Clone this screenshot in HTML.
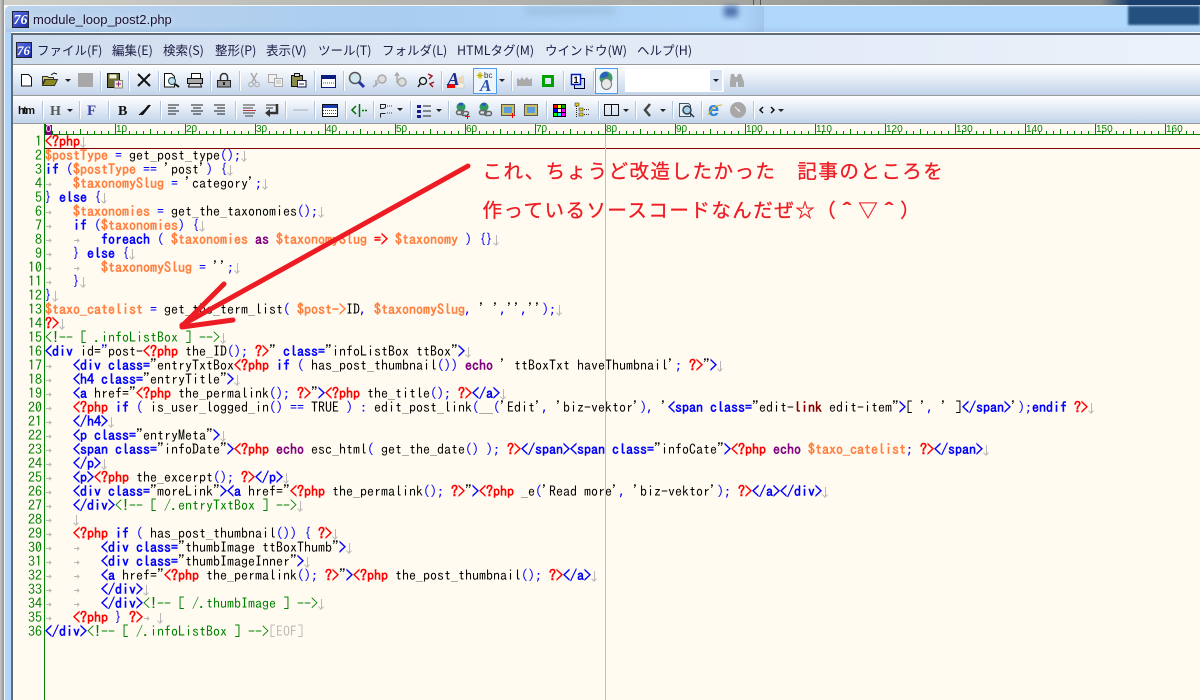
<!DOCTYPE html>
<html lang="ja"><head><meta charset="utf-8"><title>module_loop_post2.php</title>
<style>
html,body{margin:0;padding:0;background:#fffbf0}
#w{position:relative;width:1200px;height:700px;overflow:hidden;background:#fffbf0}
#w div{position:absolute}
.m{top:42px;font:12.5px/16px "Noto Sans CJK JP",sans-serif;color:#1c1c44;white-space:pre}
.l{left:45px;height:14px;font:14px/14px "IPAGothic","Liberation Mono",monospace;color:#000;white-space:pre;width:1155px;overflow:hidden}
.ln{left:13px;width:29px;text-align:right;height:14px;font:14px/14px "IPAGothic",monospace;color:#008000}
.l i{font-style:normal}
.r{color:#f00;font-weight:bold}.b{color:#00f;font-weight:bold}.n{color:#00f}.o{color:#ff8040;font-weight:bold}
.p{color:#800080;font-weight:bold}.g{color:#008000}.d{color:#800000;font-weight:bold}.x{color:#bbb}
.t,.e{display:inline-block;position:relative;height:14px;color:transparent;font:11px/14px "Liberation Mono",monospace;vertical-align:top}
.t{width:28px}.e{width:7px}
.t::before{content:"";position:absolute;left:1px;top:8px;width:5px;height:1px;background:#b8b8b8}
.t::after{content:"";position:absolute;left:3px;top:7px;width:2px;height:2px;border-top:1px solid #b8b8b8;border-right:1px solid #b8b8b8;transform:rotate(45deg)}
.e::before{content:"";position:absolute;left:3px;top:3px;width:1px;height:10px;background:#b8b8b8}
.e::after{content:"";position:absolute;left:1px;top:9px;width:3px;height:3px;border-bottom:1px solid #b8b8b8;border-right:1px solid #b8b8b8;transform:rotate(45deg)}
.rl{top:125px;font:10px/10px "Liberation Sans",sans-serif;color:#008000}
.s{width:1px;background:#b4c6dc;box-shadow:1px 0 0 #fff}
.jp{left:482.500px;font:19.500px/26px "Noto Sans CJK JP",sans-serif;letter-spacing:1.480px;color:#ed1c24;white-space:pre;-webkit-text-stroke:.3px #ed1c24}
.jp span{font-family:"IPAGothic",sans-serif;-webkit-text-stroke:1px #ed1c24}
</style></head><body><div id="w">
<!-- blurred background -->
<div style="left:0;top:0;width:1200px;height:5px;background:linear-gradient(90deg,#d0cfc8,#bdbdb8 300px,#a9a9a4 700px,#8b8b86 1000px,#8b8b86 1100px,#1b3f6d 1130px)"></div>
<div style="left:753px;top:0;width:1px;height:5px;background:#555"></div>
<div style="left:760px;top:0;width:1px;height:5px;background:#555"></div>
<div style="left:0;top:0;width:4px;height:700px;background:linear-gradient(90deg,#c8c8c8,#8f8f8f)"></div>
<!-- frame -->
<div style="left:4px;top:5px;width:1196px;height:695px;background:#b0d6fb;border-top:1px solid #f4f8fc;border-left:1px solid #f4f8fc;border-top-left-radius:6px;box-sizing:border-box"></div>
<div style="left:6px;top:6px;width:1194px;height:27px;background:linear-gradient(90deg,#bcd3ec,#a9cdf0 400px,#b0d8fd 800px,#b0d8fd 1200px);border-top-left-radius:5px"></div>
<div style="left:6px;top:26px;width:1194px;height:6px;background:linear-gradient(180deg,rgba(160,195,230,0),rgba(160,195,230,.7))"></div>
<div style="left:525px;top:6px;width:90px;height:9px;background:#88a8b8;opacity:.35;filter:blur(4px)"></div>
<div style="left:724px;top:6px;width:14px;height:11px;background:#3a5c9c;opacity:.8;filter:blur(3px)"></div>
<div style="left:738px;top:6px;width:26px;height:26px;background:linear-gradient(90deg,rgba(120,150,190,0),rgba(120,150,190,.25))"></div>
<div style="left:1128px;top:6px;width:72px;height:19px;background:#24507f;filter:blur(1px)"></div>
<div style="left:11px;top:32px;width:1189px;height:1px;background:#fff"></div>
<div style="left:11px;top:33px;width:1189px;height:2px;background:#5f6b78"></div>
<div style="left:11px;top:33px;width:2px;height:667px;background:#5f6b78"></div>
<div style="left:33px;top:11px;font:13px/17px 'Liberation Sans',sans-serif;color:#1c1030;text-shadow:0 0 6px #e8f2ff;white-space:pre">module_loop_post2.php</div>
<!-- text panel -->
<div style="left:13px;top:124px;width:1187px;height:576px;background:#fffbf0"></div>
<!-- menu -->
<div style="left:13px;top:35px;width:1187px;height:29px;background:linear-gradient(90deg,#cddcee,#dfe8f4 400px,#e6edf8 900px,#ecf2fb)"></div>
<div style="left:13px;top:64px;width:1187px;height:1px;background:#9a9a9a"></div>
<div class="m" style="left:37px">ファイル(F)</div><div class="m" style="left:112px">編集(E)</div><div class="m" style="left:163px">検索(S)</div><div class="m" style="left:215px">整形(P)</div><div class="m" style="left:266px">表示(V)</div><div class="m" style="left:318px">ツール(T)</div><div class="m" style="left:382px">フォルダ(L)</div><div class="m" style="left:457px">HTMLタグ(M)</div><div class="m" style="left:545px">ウインドウ(W)</div><div class="m" style="left:637px">ヘルプ(H)</div>
<!-- toolbars -->
<div style="left:13px;top:65px;width:1187px;height:30px;background:linear-gradient(#fff,#eef3fa 30%,#c2d4ea)"></div>
<div style="left:13px;top:95px;width:1187px;height:1px;background:#9a9a9a"></div>
<div style="left:13px;top:96px;width:1187px;height:27px;background:linear-gradient(#fff,#eef3fa 30%,#c2d4ea)"></div>
<div style="left:13px;top:123px;width:1187px;height:1px;background:#9a9a9a"></div>
<div class="s" style="left:100px;top:71px;height:20px"></div><div class="s" style="left:128px;top:71px;height:20px"></div><div class="s" style="left:158px;top:71px;height:20px"></div><div class="s" style="left:210px;top:71px;height:20px"></div><div class="s" style="left:239px;top:71px;height:20px"></div><div class="s" style="left:314px;top:71px;height:20px"></div><div class="s" style="left:343px;top:71px;height:20px"></div><div class="s" style="left:441px;top:71px;height:20px"></div><div class="s" style="left:511px;top:71px;height:20px"></div><div class="s" style="left:563px;top:71px;height:20px"></div><div class="s" style="left:593px;top:71px;height:20px"></div>
<div class="s" style="left:42px;top:101px;height:18px"></div><div class="s" style="left:79px;top:101px;height:18px"></div><div class="s" style="left:108px;top:101px;height:18px"></div><div class="s" style="left:160px;top:101px;height:18px"></div><div class="s" style="left:235px;top:101px;height:18px"></div><div class="s" style="left:285px;top:101px;height:18px"></div><div class="s" style="left:314px;top:101px;height:18px"></div><div class="s" style="left:345px;top:101px;height:18px"></div><div class="s" style="left:373px;top:101px;height:18px"></div><div class="s" style="left:410px;top:101px;height:18px"></div><div class="s" style="left:448px;top:101px;height:18px"></div><div class="s" style="left:546px;top:101px;height:18px"></div><div class="s" style="left:598px;top:101px;height:18px"></div><div class="s" style="left:635px;top:101px;height:18px"></div><div class="s" style="left:672px;top:101px;height:18px"></div><div class="s" style="left:701px;top:101px;height:18px"></div><div class="s" style="left:753px;top:101px;height:18px"></div>
<!-- ruler -->
<div style="left:45px;top:131px;width:1155px;height:3px;background:repeating-linear-gradient(90deg,#008000 0 1px,transparent 1px 7px)"></div>
<div style="left:45px;top:129px;width:1155px;height:2px;background:repeating-linear-gradient(90deg,#008000 0 1px,transparent 1px 35px)"></div>
<div style="left:45px;top:124px;width:1155px;height:5px;background:repeating-linear-gradient(90deg,#008000 0 1px,transparent 1px 70px)"></div>
<div style="left:45px;top:134px;width:1155px;height:1px;background:#008000"></div>
<div style="left:45px;top:125px;width:7px;height:10px;background:#800080;color:#fff;font:10px/10px 'Liberation Sans',sans-serif;text-align:center">0</div>
<div class="rl" style="left:116px">10</div><div class="rl" style="left:186px">20</div><div class="rl" style="left:256px">30</div><div class="rl" style="left:326px">40</div><div class="rl" style="left:396px">50</div><div class="rl" style="left:466px">60</div><div class="rl" style="left:536px">70</div><div class="rl" style="left:606px">80</div><div class="rl" style="left:676px">90</div><div class="rl" style="left:746px">100</div><div class="rl" style="left:816px">110</div><div class="rl" style="left:886px">120</div><div class="rl" style="left:956px">130</div><div class="rl" style="left:1026px">140</div><div class="rl" style="left:1096px">150</div><div class="rl" style="left:1166px">160</div>
<div style="left:44px;top:124px;width:1px;height:576px;background:#008000"></div>
<!-- line numbers -->
<div class="ln" style="top:134px">1</div><div class="ln" style="top:148px">2</div><div class="ln" style="top:162px">3</div><div class="ln" style="top:176px">4</div><div class="ln" style="top:190px">5</div><div class="ln" style="top:204px">6</div><div class="ln" style="top:218px">7</div><div class="ln" style="top:232px">8</div><div class="ln" style="top:246px">9</div><div class="ln" style="top:260px">10</div><div class="ln" style="top:274px">11</div><div class="ln" style="top:288px">12</div><div class="ln" style="top:302px">13</div><div class="ln" style="top:316px">14</div><div class="ln" style="top:330px">15</div><div class="ln" style="top:344px">16</div><div class="ln" style="top:358px">17</div><div class="ln" style="top:372px">18</div><div class="ln" style="top:386px">19</div><div class="ln" style="top:400px">20</div><div class="ln" style="top:414px">21</div><div class="ln" style="top:428px">22</div><div class="ln" style="top:442px">23</div><div class="ln" style="top:456px">24</div><div class="ln" style="top:470px">25</div><div class="ln" style="top:484px">26</div><div class="ln" style="top:498px">27</div><div class="ln" style="top:512px">28</div><div class="ln" style="top:526px">29</div><div class="ln" style="top:540px">30</div><div class="ln" style="top:554px">31</div><div class="ln" style="top:568px">32</div><div class="ln" style="top:582px">33</div><div class="ln" style="top:596px">34</div><div class="ln" style="top:610px">35</div><div class="ln" style="top:624px">36</div>
<!-- code -->
<div class="l" style="top:134px"><i class="r">&lt;?php</i><span class="e">↓</span></div>
<div class="l" style="top:148px"><i class="o">$postType</i> <i class="n">=</i> get_post_type<i class="n">();</i><span class="e">↓</span></div>
<div class="l" style="top:162px"><i class="b">if</i> <i class="n">(</i><i class="o">$postType</i> <i class="n">==</i> 'post'<i class="n">) {</i><span class="e">↓</span></div>
<div class="l" style="top:176px"><span class="t">→</span><i class="o">$taxonomySlug</i> <i class="n">=</i> 'category'<i class="n">;</i><span class="e">↓</span></div>
<div class="l" style="top:190px"><i class="n">}</i> <i class="b">else</i> <i class="n">{</i><span class="e">↓</span></div>
<div class="l" style="top:204px"><span class="t">→</span><i class="o">$taxonomies</i> <i class="n">=</i> get_the_taxonomies<i class="n">();</i><span class="e">↓</span></div>
<div class="l" style="top:218px"><span class="t">→</span><i class="b">if</i> <i class="n">(</i><i class="o">$taxonomies</i><i class="n">) {</i><span class="e">↓</span></div>
<div class="l" style="top:232px"><span class="t">→</span><span class="t">→</span><i class="b">foreach</i> <i class="n">(</i> <i class="o">$taxonomies</i> <i class="p">as</i> <i class="o">$taxonomySlug</i> <i class="r">=&gt;</i> <i class="o">$taxonomy</i> <i class="n">) {}</i><span class="e">↓</span></div>
<div class="l" style="top:246px"><span class="t">→</span><i class="n">}</i> <i class="b">else</i> <i class="n">{</i><span class="e">↓</span></div>
<div class="l" style="top:260px"><span class="t">→</span><span class="t">→</span><i class="o">$taxonomySlug</i> <i class="n">=</i> ''<i class="n">;</i><span class="e">↓</span></div>
<div class="l" style="top:274px"><span class="t">→</span><i class="n">}</i><span class="e">↓</span></div>
<div class="l" style="top:288px"><i class="n">}</i><span class="e">↓</span></div>
<div class="l" style="top:302px"><i class="o">$taxo_catelist</i> <i class="n">=</i> get_the_term_list<i class="n">(</i> <i class="o">$post-&gt;</i>ID<i class="n">,</i> <i class="o">$taxonomySlug</i><i class="n">,</i> ' '<i class="n">,</i>''<i class="n">,</i>''<i class="n">);</i><span class="e">↓</span></div>
<div class="l" style="top:316px"><i class="r">?&gt;</i><span class="e">↓</span></div>
<div class="l" style="top:330px"><i class="g">&lt;!-- [ .infoListBox ] --&gt;</i><span class="e">↓</span></div>
<div class="l" style="top:344px"><i class="b">&lt;div</i> id=<i class="n">"</i>post-<i class="r">&lt;?php</i> the_ID<i class="n">();</i> <i class="r">?&gt;</i>" <i class="b">class=</i>"infoListBox ttBox"<i class="b">&gt;</i><span class="e">↓</span></div>
<div class="l" style="top:358px"><span class="t">→</span><i class="b">&lt;div class=</i>"entryTxtBox<i class="r">&lt;?php</i> <i class="b">if</i> <i class="n">(</i> has_post_thumbnail<i class="n">())</i> <i class="p">echo</i> ' ttBoxTxt haveThumbnail'<i class="n">;</i> <i class="r">?&gt;</i>"<i class="b">&gt;</i><span class="e">↓</span></div>
<div class="l" style="top:372px"><span class="t">→</span><i class="b">&lt;h4 class=</i>"entryTitle"<i class="b">&gt;</i><span class="e">↓</span></div>
<div class="l" style="top:386px"><span class="t">→</span><i class="b">&lt;a</i> href="<i class="r">&lt;?php</i> the_permalink<i class="n">();</i> <i class="r">?&gt;</i>"<i class="b">&gt;</i><i class="r">&lt;?php</i> the_title<i class="n">();</i> <i class="r">?&gt;</i><i class="b">&lt;/a&gt;</i><span class="e">↓</span></div>
<div class="l" style="top:400px"><span class="t">→</span><i class="r">&lt;?php</i> <i class="b">if</i> <i class="n">(</i> is_user_logged_in<i class="n">()</i> <i class="n">==</i> TRUE <i class="n">) :</i> edit_post_link<i class="n">(</i>__<i class="n">(</i>'Edit'<i class="n">,</i> 'biz-vektor'<i class="n">),</i> '<i class="b">&lt;span class=</i>"edit-<i class="d">link</i> edit-item"<i class="b">&gt;</i>[ '<i class="n">,</i> ' ]<i class="b">&lt;/span&gt;</i>'<i class="n">);</i><i class="b">endif</i> <i class="r">?&gt;</i><span class="e">↓</span></div>
<div class="l" style="top:414px"><span class="t">→</span><i class="b">&lt;/h4&gt;</i><span class="e">↓</span></div>
<div class="l" style="top:428px"><span class="t">→</span><i class="b">&lt;p class=</i>"entryMeta"<i class="b">&gt;</i><span class="e">↓</span></div>
<div class="l" style="top:442px"><span class="t">→</span><i class="b">&lt;span class=</i>"infoDate"<i class="b">&gt;</i><i class="r">&lt;?php</i> <i class="p">echo</i> esc_html<i class="n">(</i> get_the_date<i class="n">() );</i> <i class="r">?&gt;</i><i class="b">&lt;/span&gt;&lt;span class=</i>"infoCate"<i class="b">&gt;</i><i class="r">&lt;?php</i> <i class="p">echo</i> <i class="o">$taxo_catelist</i><i class="n">;</i> <i class="r">?&gt;</i><i class="b">&lt;/span&gt;</i><span class="e">↓</span></div>
<div class="l" style="top:456px"><span class="t">→</span><i class="b">&lt;/p&gt;</i><span class="e">↓</span></div>
<div class="l" style="top:470px"><span class="t">→</span><i class="b">&lt;p&gt;</i><i class="r">&lt;?php</i> the_excerpt<i class="n">();</i> <i class="r">?&gt;</i><i class="b">&lt;/p&gt;</i><span class="e">↓</span></div>
<div class="l" style="top:484px"><span class="t">→</span><i class="b">&lt;div class=</i>"moreLink"<i class="b">&gt;&lt;a</i> href="<i class="r">&lt;?php</i> the_permalink<i class="n">();</i> <i class="r">?&gt;</i>"<i class="b">&gt;</i><i class="r">&lt;?php</i> _e<i class="n">(</i>'Read more'<i class="n">,</i> 'biz-vektor'<i class="n">);</i> <i class="r">?&gt;</i><i class="b">&lt;/a&gt;&lt;/div&gt;</i><span class="e">↓</span></div>
<div class="l" style="top:498px"><span class="t">→</span><i class="b">&lt;/div&gt;</i><i class="g">&lt;!-- [ /.entryTxtBox ] --&gt;</i><span class="e">↓</span></div>
<div class="l" style="top:512px"><span class="t">→</span><span class="e">↓</span></div>
<div class="l" style="top:526px"><span class="t">→</span><i class="r">&lt;?php</i> <i class="b">if</i> <i class="n">(</i> has_post_thumbnail<i class="n">()) {</i> <i class="r">?&gt;</i><span class="e">↓</span></div>
<div class="l" style="top:540px"><span class="t">→</span><span class="t">→</span><i class="b">&lt;div class=</i>"thumbImage ttBoxThumb"<i class="b">&gt;</i><span class="e">↓</span></div>
<div class="l" style="top:554px"><span class="t">→</span><span class="t">→</span><i class="b">&lt;div class=</i>"thumbImageInner"<i class="b">&gt;</i><span class="e">↓</span></div>
<div class="l" style="top:568px"><span class="t">→</span><span class="t">→</span><i class="b">&lt;a</i> href="<i class="r">&lt;?php</i> the_permalink<i class="n">();</i> <i class="r">?&gt;</i>"<i class="b">&gt;</i><i class="r">&lt;?php</i> the_post_thumbnail<i class="n">();</i> <i class="r">?&gt;</i><i class="b">&lt;/a&gt;</i><span class="e">↓</span></div>
<div class="l" style="top:582px"><span class="t">→</span><span class="t">→</span><i class="b">&lt;/div&gt;</i><span class="e">↓</span></div>
<div class="l" style="top:596px"><span class="t">→</span><span class="t">→</span><i class="b">&lt;/div&gt;</i><i class="g">&lt;!-- [ /.thumbImage ] --&gt;</i><span class="e">↓</span></div>
<div class="l" style="top:610px"><span class="t">→</span><i class="r">&lt;?php</i> <i class="n">}</i> <i class="r">?&gt;</i><span class="t" style="width:14px">→</span><span class="e">↓</span></div>
<div class="l" style="top:624px"><i class="b">&lt;/div&gt;</i><i class="g">&lt;!-- [ /.infoListBox ] --&gt;</i><i class="x">[EOF]</i></div>
<!-- cursor lines -->
<div style="left:45px;top:148px;width:1155px;height:1px;background:#800000"></div>
<div style="left:605px;top:135px;width:1px;height:565px;background:#c0c0c0"></div>
<!-- annotation -->
<div class="jp" style="top:157px">これ、ちょうど改造したかった　記事のところを</div>
<div class="jp" style="top:196px">作っているソースコードなんだぜ☆（<span>＾</span>▽<span>＾</span>）</div>
<!-- combo and highlights -->
<div style="left:473px;top:68px;width:22px;height:24px;border:1px solid #4a9df0;background:#eef5fd"></div>
<div style="left:595px;top:68px;width:21px;height:24px;border:1px solid #4a9df0;background:#eef5fd"></div>
<div style="left:625px;top:69px;width:98px;height:23px;background:#fff;box-shadow:1px 0 0 #f4f8fc"></div>
<div style="left:710px;top:70px;width:12px;height:21px;background:#d9e5f4"></div>
<svg width="1200" height="700" viewBox="0 0 1200 700" style="position:absolute;left:0;top:0">
<defs><linearGradient id="lg" x1="0" y1="0" x2="1" y2="1"><stop offset="0" stop-color="#5b73e8"/><stop offset="1" stop-color="#1a2aa8"/></linearGradient></defs>
<!-- logos -->
<rect x="12.500" y="11.500" width="16" height="16" fill="url(#lg)" stroke="#223"/>
<text x="13.500" y="24" font-family="Liberation Serif" font-style="italic" font-weight="bold" font-size="14" fill="#fff">76</text>
<rect x="16.500" y="42.500" width="15" height="15" fill="url(#lg)" stroke="#223"/>
<text x="17" y="55" font-family="Liberation Serif" font-style="italic" font-weight="bold" font-size="13" fill="#fff">76</text>
<!-- new -->
<path d="M21.500 74.500h7l3 3v8.500h-10z" fill="#fff" stroke="#111"/>
<!-- open -->
<path d="M42.500 84.500v-8h5l1 1h5v2h-9l-2 5z" fill="#d8c868" stroke="#333"/><path d="M42.500 85.500l3-6h12l-3 6z" fill="#8a8a20" stroke="#333"/><path d="M51 75l3-2 3 1" fill="none" stroke="#111"/>
<path d="M65 79h6l-3 3z" fill="#222"/>
<rect x="78" y="73" width="15" height="14" fill="#a8a8a8"/>
<!-- save -->
<rect x="107.500" y="73.500" width="12" height="14" fill="#6a6a30" stroke="#111"/><rect x="109.500" y="74.500" width="7" height="4" fill="#f0f0d8"/><rect x="114.500" y="80.500" width="8" height="7.500" fill="#f6efb8" stroke="#888"/><path d="M116 84h5M118.500 81.500v5" stroke="#80208a" fill="none"/>
<!-- x -->
<path d="M138 74l12 12M150 74l-12 12" stroke="#111" stroke-width="2" fill="none"/>
<!-- preview -->
<path d="M164.500 73.500h7l3 3v10.500h-10z" fill="#fff" stroke="#111"/><circle cx="172" cy="81" r="3.500" fill="#bfe0f0" stroke="#244"/><path d="M175 84l4 3" stroke="#111" stroke-width="2"/>
<!-- printer -->
<path d="M191.500 73.500h9v5h-9z" fill="#fff" stroke="#111"/><path d="M187.500 78.500h15v5h-15z" fill="#aaa" stroke="#111"/><path d="M189.500 83.500h11l1 3.500h-13z" fill="#ddd" stroke="#111"/>
<!-- lock -->
<path d="M220.500 80v-3a3.500 3.500 0 0 1 7 0v3" fill="none" stroke="#333" stroke-width="1.500"/><rect x="217.500" y="80.500" width="13" height="6.500" fill="#999" stroke="#222"/><rect x="223" y="82" width="2" height="3" fill="#222"/>
<!-- scissors -->
<path d="M251 73l5 9M257 73l-5 9" stroke="#aaa" fill="none" stroke-width="1.500"/><circle cx="251" cy="84.500" r="2.300" fill="none" stroke="#aaa"/><circle cx="257" cy="84.500" r="2.300" fill="none" stroke="#aaa"/>
<!-- copy -->
<path d="M268.500 74.500h8v8h-8z" fill="#f0f0f0" stroke="#aaa"/><path d="M274.500 78.500h8v8h-8z" fill="#f0f0f0" stroke="#aaa"/><path d="M276 81h5M276 83h5" stroke="#bbb"/>
<!-- paste -->
<rect x="291.500" y="75.500" width="11" height="11" fill="#8a8a4a" stroke="#111"/><rect x="294.500" y="73.500" width="5" height="3" fill="#ddd" stroke="#111"/><rect x="297.500" y="80.500" width="8.500" height="6.500" fill="#fff" stroke="#114"/><path d="M299 84h5" stroke="#225"/>
<!-- window -->
<rect x="321.500" y="75.500" width="14" height="12" fill="#fff" stroke="#0a1a80"/><rect x="322" y="76" width="13" height="3" fill="#0a1a80"/><path d="M323 83h11" stroke="#555" stroke-dasharray="1 1"/>
<!-- magnifiers -->
<circle cx="355" cy="78" r="5.500" fill="#cfe8f0" stroke="#555" stroke-width="1.500"/><path d="M359 82l5 5" stroke="#2233aa" stroke-width="3"/>
<circle cx="382" cy="79" r="4" fill="#ddd" stroke="#aaa" stroke-width="1.500"/><path d="M378 83l-5 4M376 80v6" stroke="#aaa" stroke-width="1.500" fill="none"/>
<circle cx="402" cy="82" r="4" fill="#ddd" stroke="#aaa" stroke-width="1.500"/><path d="M397 74v9M395 76l2-3 2 3" stroke="#aaa" fill="none" stroke-width="1.500"/>
<circle cx="423" cy="81" r="3.500" fill="#e0f0f0" stroke="#111" stroke-width="1.300"/><path d="M420 84l-2 3" stroke="#111" stroke-width="1.500"/><path d="M428 74l4 2-3 3M434 82l-4 2 3 3" stroke="#a01818" stroke-width="1.500" fill="none"/>
<!-- A color -->
<path d="M456 79l8-4v13h-8z" fill="#ecd9c0"/><rect x="456" y="83" width="8" height="5" fill="#f8f0e0" stroke="#bbb" stroke-width=".5"/><rect x="447" y="84" width="8" height="4" fill="#e00"/>
<text x="447.500" y="85" font-family="Liberation Serif" font-style="italic" font-weight="bold" font-size="18" fill="#1a2a90">A</text>
<!-- highlight A -->
<text x="480" y="91" font-family="Liberation Serif" font-style="italic" font-weight="bold" font-size="17" fill="#2a50b0">A</text><text x="484" y="78" font-family="Liberation Sans" font-size="8" fill="#333">bc</text><path d="M480 72v7M476.500 75.500h7M478 73.500l4 4M482 73.500l-4 4" stroke="#c8b400"/>
<path d="M499 79h6l-3 3z" fill="#222"/>
<!-- crown -->
<path d="M517 78l3 2 2-3 2 3 3-3 2 3 3-2v8h-15z" fill="#aaa"/>
<rect x="543.500" y="76.500" width="9" height="9" fill="none" stroke="#00a000" stroke-width="3"/>
<!-- 1 window -->
<rect x="574.500" y="78.500" width="10" height="10" fill="#cde" stroke="#003"/><rect x="571.500" y="74.500" width="9" height="10" fill="#fff" stroke="#0018c0" stroke-width="1.500"/><text x="573.500" y="83" font-family="Liberation Sans" font-weight="bold" font-size="9" fill="#000">1</text>
<!-- globe mouse -->
<circle cx="606" cy="78" r="6.500" fill="#3aa060"/><path d="M600 78a6 6 0 0 1 7-6l2 4-5 2z" fill="#2a60c0"/><ellipse cx="606.500" cy="84" rx="5" ry="5.500" fill="#e8e8e8" stroke="#777"/>
<!-- combo arrow, binoculars -->
<path d="M713 79h6l-3 3z" fill="#222"/>
<path d="M731 74h3l1 3h2l1-3h3l3 8v5h-6v-5h-2v5h-6v-5z" fill="#aaa"/>
<!-- toolbar 2 -->
<text x="18" y="114" font-family="Liberation Sans" font-weight="bold" font-size="11" fill="#111" textLength="17">htm</text>
<text x="50" y="115" font-family="Liberation Serif" font-weight="bold" font-size="14" fill="#555">H</text><path d="M67 109h6l-3 3z" fill="#222"/>
<text x="87" y="115" font-family="Liberation Serif" font-weight="bold" font-size="15" fill="#3c44a8">F</text>
<text x="118" y="115" font-family="Liberation Serif" font-weight="bold" font-size="14" fill="#111">B</text>
<path d="M139 115l11-10" stroke="#111" stroke-width="1"/><path d="M140 115h3l8-10h-3z" fill="#111"/>
<path d="M168 105h11M168 108h8M168 111h11M168 114h8" stroke="#222"/>
<path d="M191 105h12M193 108h8M191 111h12M193 114h8" stroke="#222"/>
<path d="M214 105h11M217 108h8M214 111h11M217 114h8" stroke="#222"/>
<path d="M243 105h12M243 108h10" stroke="#444"/><path d="M243 110.500h13" stroke="#c03030"/><path d="M243 113h12M245 116h8" stroke="#444"/>
<path d="M266 105h10M266 108h7" stroke="#333"/><path d="M277 104v9h-9" stroke="#333" stroke-width="2.500" fill="none"/><path d="M270 109l-5 4 5 4z" fill="#333"/>
<path d="M293 110h15" stroke="#a8b0b8"/>
<rect x="322.500" y="104.500" width="15" height="12" fill="#fff" stroke="#111"/><rect x="323" y="105" width="14" height="3" fill="#1a3ab0"/><path d="M323 110.500h14M323 113.500h14" stroke="#444" stroke-dasharray="1 1"/>
<path d="M356 106l-4 4 4 4" stroke="#007000" stroke-width="1.500" fill="none"/><path d="M359.500 104v13" stroke="#007000" stroke-width="1.500"/><path d="M362 110.500h5" stroke="#007000" stroke-width="1.500" stroke-dasharray="2 1"/>
<path d="M380.500 104.500h5v3l-2 1h-3zM380.500 113.500h5M380.500 113.500v4" fill="none" stroke="#222"/><path d="M387 106h6M387 113h6" stroke="#444" stroke-dasharray="1 1"/><path d="M397 108h6l-3 3z" fill="#222"/>
<path d="M417 105h4v3h-4zM417 110h4v3h-4zM417 115h4v3h-4z" fill="#1a1a90"/><path d="M423 106h8M423 111h8M423 116h8" stroke="#222"/><path d="M436 109h6l-3 3z" fill="#222"/>
<!-- links -->
<circle cx="461" cy="107" r="4.500" fill="#2f9a60"/><circle cx="484" cy="107" r="4.500" fill="#2f9a60"/><path d="M458 105a4 4 0 0 1 5-2l-1 3z M481 105a4 4 0 0 1 5-2l-1 3z" fill="#2a50d0"/>
<rect x="456.500" y="110.500" width="7" height="4" rx="2" fill="none" stroke="#666" stroke-width="1.500"/><rect x="461.500" y="111.500" width="7" height="4" rx="2" fill="none" stroke="#666" stroke-width="1.500"/>
<rect x="479.500" y="110.500" width="7" height="4" rx="2" fill="none" stroke="#666" stroke-width="1.500"/><rect x="484.500" y="111.500" width="7" height="4" rx="2" fill="none" stroke="#666" stroke-width="1.500"/>
<path d="M465 116.500h5M467.500 114v5" stroke="#e00"/>
<rect x="501.500" y="104.500" width="13" height="11" fill="#c8c060" stroke="#555"/><rect x="504" y="107" width="8" height="6" fill="#5a9ae0"/><path d="M510 115.500h5M512.500 113v5" stroke="#e00"/>
<rect x="524.500" y="104.500" width="13" height="11" fill="#c8c060" stroke="#555"/><rect x="527" y="107" width="8" height="6" fill="#5a9ae0"/>
<!-- colors -->
<rect x="553" y="104" width="13" height="13" fill="#000"/><rect x="554" y="105" width="3" height="3" fill="#f00"/><rect x="558" y="105" width="3" height="3" fill="#ff0"/><rect x="562" y="105" width="3" height="3" fill="#0a0"/><rect x="554" y="109" width="3" height="3" fill="#00f"/><rect x="558" y="109" width="3" height="3" fill="#fff"/><rect x="562" y="109" width="3" height="3" fill="#f0f"/><rect x="554" y="113" width="3" height="3" fill="#0f0"/><rect x="558" y="113" width="3" height="3" fill="#0ff"/><rect x="562" y="113" width="3" height="3" fill="#f0f"/>
<!-- tree -->
<path d="M576.500 104v13" stroke="#222" stroke-dasharray="1 1"/><rect x="575" y="103" width="4" height="3" fill="#e0d020" stroke="#222" stroke-width=".5"/><rect x="579" y="108" width="4" height="3" fill="#e0d020" stroke="#222" stroke-width=".5"/><rect x="579" y="113" width="4" height="3" fill="#e0d020" stroke="#222" stroke-width=".5"/><path d="M584 109.500h6M584 114.500h6" stroke="#333" stroke-dasharray="1 1"/>
<!-- split -->
<rect x="604.500" y="104.500" width="14" height="11" fill="none" stroke="#111"/><path d="M611.500 104v12" stroke="#111"/><path d="M623 109h6l-3 3z" fill="#222"/>
<path d="M650 104l-5 6 5 6" stroke="#444" stroke-width="2.500" fill="none"/><path d="M660 109h6l-3 3z" fill="#222"/>
<!-- preview2 -->
<path d="M679.500 103.500h9l2 2v11h-11z" fill="#e8f0f8" stroke="#456"/><circle cx="687" cy="110" r="4" fill="#a8d0e8" stroke="#345" stroke-width="1.500"/><path d="M690 113l4 4" stroke="#234" stroke-width="1.500"/>
<!-- IE -->
<text x="708" y="116" font-family="Liberation Sans" font-weight="bold" font-size="20" fill="#2a86d8">e</text>
<path d="M708 115c3-7 9-10 14-10" fill="none" stroke="#d8b030"/>
<!-- gray circle -->
<circle cx="738" cy="110" r="8" fill="#a8a8a8"/><path d="M735 107l5 5M740 112l-2-3" stroke="#eee" fill="none"/>
<path d="M763 107l-3 3 3 3M771 107l3 3-3 3" stroke="#111" stroke-width="1.500" fill="none"/><path d="M778 109h6l-3 3z" fill="#222"/>
<!-- red arrow -->
<g fill="none" stroke="#ed1c24" stroke-linecap="round">
<path d="M468 166L182 325" stroke-width="5"/>
<path d="M224 284L182 326" stroke-width="5"/>
<path d="M233 320L182 327" stroke-width="5"/>
</g>
</svg>
</div></body></html>
